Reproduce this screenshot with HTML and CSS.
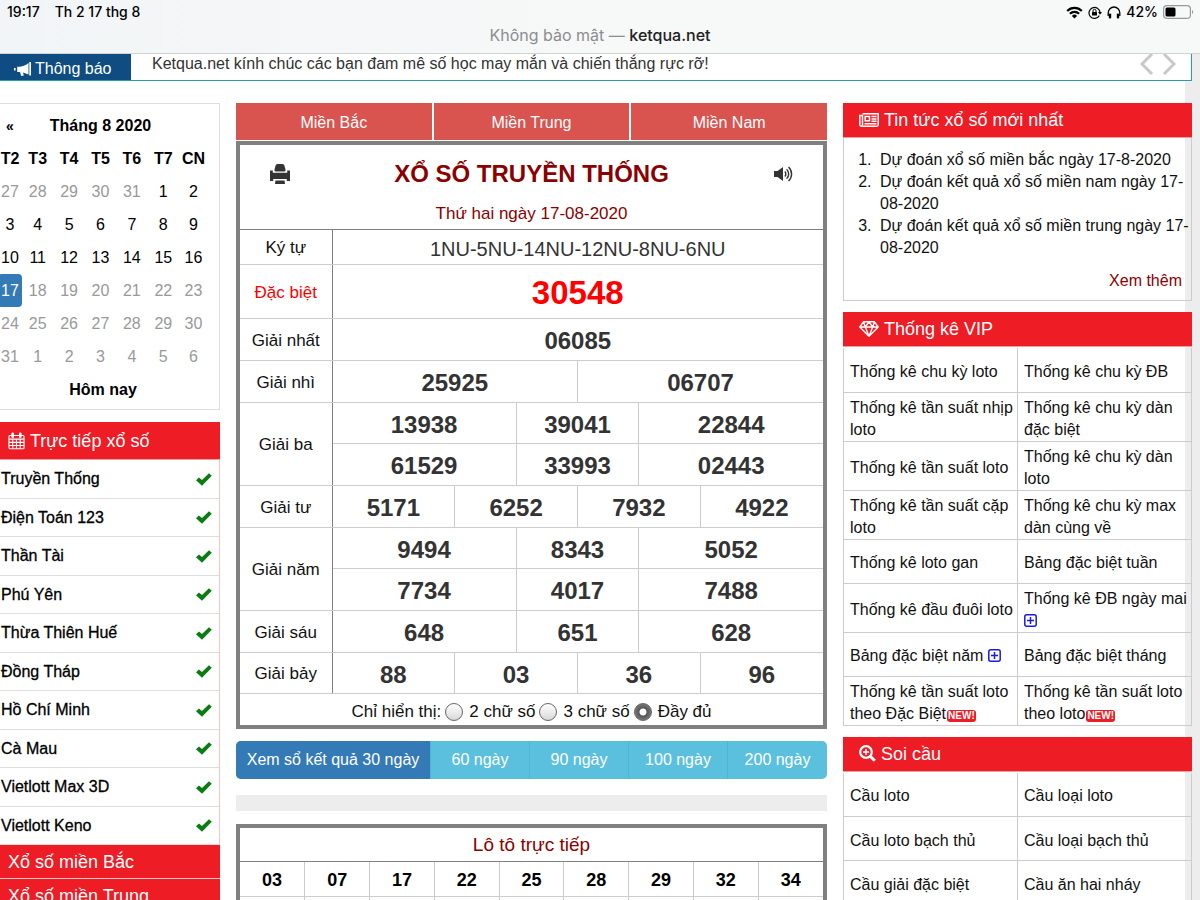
FILE: index.html
```html
<!DOCTYPE html>
<html lang="vi">
<head>
<meta charset="utf-8">
<meta name="viewport" content="width=device-width, initial-scale=1">
<title>ketqua.net</title>
<link rel="stylesheet" href="styles.css">
</head>
<body>
<svg class="defs" aria-hidden="true">
  <symbol id="check" viewBox="0 0 16 13"><path d="M0 7.2 2.9 4.4 6 7.1 13 .2 15.8 2.8 6 12.8z"/></symbol>
  <symbol id="plus" viewBox="0 0 13 13"><rect x=".8" y=".8" width="11.4" height="11.4" rx="2"/><path d="M6.500 3v7M3 6.500h7"/></symbol>
</svg>
<header class="browser">
  <div class="status">
    <div class="status-left"><span>19:17</span><span>Th 2 17 thg 8</span></div>
    <div class="status-right">
      <svg width="17" height="13" viewBox="0 0 17 13" fill="none" stroke="#000" stroke-width="2.200"><path d="M1.200 5A10.300 10.300 0 0 1 15.800 5M3.900 7.700a6.500 6.500 0 0 1 9.200 0"/><path d="M8.500 12.500 5.900 9.900a3.700 3.700 0 0 1 5.200 0z" fill="#000" stroke="none"/></svg>
      <svg width="14" height="13" viewBox="0 0 14 13"><path d="M11.300 9.600A5.500 5.500 0 1 1 12 6.500" fill="none" stroke="#000" stroke-width="1.200"/><path d="M10 6h4l-2 2.800z"/><rect x="4" y="6" width="5" height="3.600" rx=".5"/><path d="M5 6V4.800a1.500 1.500 0 0 1 3 0V6" fill="none" stroke="#000"/></svg>
      <svg width="14" height="13" viewBox="0 0 14 13"><path d="M1.200 10V6.800a5.800 5.800 0 0 1 11.600 0V10" fill="none" stroke="#000" stroke-width="1.300"/><rect x="1.800" y="7.500" width="2.400" height="5" rx="1"/><rect x="9.800" y="7.500" width="2.400" height="5" rx="1"/></svg>
      <span>42%</span>
      <svg width="31" height="14" viewBox="0 0 31 14"><rect x=".6" y=".6" width="26.800" height="12.800" rx="3.500" fill="none" stroke="#999" stroke-width="1.200"/><rect x="2.500" y="2.500" width="10" height="9" rx="1.500"/><path d="M29 5v4c1.600-.6 1.600-3.400 0-4z" fill="#999"/></svg>
    </div>
  </div>
  <div class="address">Không bảo mật — <b>ketqua.net</b></div>
</header>
<div class="page">
<section class="notice">
  <h2 class="notice-label"><svg width="17" height="15" viewBox="0 0 17 15" fill="#fff"><path d="M14.500 1v11.500L9 10.400l.8 3.200-2.600.3L6 10H3.200V4.800H6C9 4.400 12 3 14.500 1zM15.300 0H17v13.500h-1.700zM0 6h1.600v2.500H0z"/></svg>Thông báo</h2>
  <p class="notice-text">Ketqua.net kính chúc các bạn đam mê số học may mắn và chiến thắng rực rỡ!</p>
  <div class="notice-nav">
    <button aria-label="Trước"><svg width="14" height="22" viewBox="0 0 14 22"><path d="M12 0 2 10l10 10"/></svg></button>
    <button aria-label="Sau"><svg width="14" height="22" viewBox="0 0 14 22"><path d="m2 0 10 10L2 20"/></svg></button>
  </div>
</section>
<main class="columns">
  <aside class="left">
    <div class="calendar">
      <table>
        <colgroup><col class="c-first"><col><col><col><col><col><col class="c-last"></colgroup>
        <thead>
          <tr><th class="prev">«</th><th colspan="5">Tháng 8 2020</th><th></th></tr>
          <tr><th>T2</th><th>T3</th><th>T4</th><th>T5</th><th>T6</th><th>T7</th><th>CN</th></tr>
        </thead>
        <tbody>
          <tr><td class="off">27</td><td class="off">28</td><td class="off">29</td><td class="off">30</td><td class="off">31</td><td>1</td><td>2</td></tr>
          <tr><td>3</td><td>4</td><td>5</td><td>6</td><td>7</td><td>8</td><td>9</td></tr>
          <tr><td>10</td><td>11</td><td>12</td><td>13</td><td>14</td><td>15</td><td>16</td></tr>
          <tr><td class="today">17</td><td class="off">18</td><td class="off">19</td><td class="off">20</td><td class="off">21</td><td class="off">22</td><td class="off">23</td></tr>
          <tr class="off"><td>24</td><td>25</td><td>26</td><td>27</td><td>28</td><td>29</td><td>30</td></tr>
          <tr class="off"><td>31</td><td>1</td><td>2</td><td>3</td><td>4</td><td>5</td><td>6</td></tr>
        </tbody>
        <tfoot><tr><th colspan="7">Hôm nay</th></tr></tfoot>
      </table>
    </div>
    <section class="live">
      <h2 class="bar live-bar"><svg width="17" height="18" viewBox="0 0 18 18" fill="none" stroke="#fff" stroke-width="1.200"><rect x="1" y="3.200" width="16" height="14" rx="1"/><path d="M1 7h16M1 10.400h16M1 13.800h16M5 7v10M9 7v10M13 7v10"/><path d="M5 1.500v3M13 1.500v3" stroke-width="2.800" stroke-linecap="round"/></svg>Trực tiếp xổ số</h2>
      <ul>
        <li><a href="#">Truyền Thống</a><svg class="check"><use href="#check"/></svg></li>
        <li><a href="#">Điện Toán 123</a><svg class="check"><use href="#check"/></svg></li>
        <li><a href="#">Thần Tài</a><svg class="check"><use href="#check"/></svg></li>
        <li><a href="#">Phú Yên</a><svg class="check"><use href="#check"/></svg></li>
        <li><a href="#">Thừa Thiên Huế</a><svg class="check"><use href="#check"/></svg></li>
        <li><a href="#">Đồng Tháp</a><svg class="check"><use href="#check"/></svg></li>
        <li><a href="#">Hồ Chí Minh</a><svg class="check"><use href="#check"/></svg></li>
        <li><a href="#">Cà Mau</a><svg class="check"><use href="#check"/></svg></li>
        <li><a href="#">Vietlott Max 3D</a><svg class="check"><use href="#check"/></svg></li>
        <li><a href="#">Vietlott Keno</a><svg class="check"><use href="#check"/></svg></li>
      </ul>
    </section>
    <h2 class="bar region">Xổ số miền Bắc</h2>
    <h2 class="bar region">Xổ số miền Trung</h2>
  </aside>

  <div class="center">
    <nav class="tabs"><a href="#">Miền Bắc</a><a href="#">Miền Trung</a><a href="#">Miền Nam</a></nav>
    <section class="results">
      <div class="results-head">
        <button aria-label="In"><svg width="20" height="20" viewBox="0 0 20 20" fill="#333"><path d="M7.500 0h5q1.500 0 1.900 1.500L15.600 6q0 1.500-1.500 1.500H5.900Q4.400 7.500 4.400 6l1.200-4.500Q6 0 7.500 0zM0 6.500h2.800v2.300h14.400V6.500H20V17h-3.200v-2H3.200v2H0zM5.500 16.500h9l.5 3.500H5z"/></svg></button>
        <h1>XỔ SỐ TRUYỀN THỐNG</h1>
        <button aria-label="Âm thanh"><svg width="19" height="16" viewBox="0 0 19 16" fill="none" stroke="#333" stroke-width="1.400"><path d="M0 5h3.500L9 1v14l-5.500-4H0z" fill="#333" stroke="none"/><path d="M10.800 5.500a3.500 3.500 0 0 1 0 5M12.600 3.200a6.600 6.600 0 0 1 0 9.600M14.500 1a9.500 9.500 0 0 1 0 14"/></svg></button>
        <p>Thứ hai ngày 17-08-2020</p>
      </div>
      <table class="prizes">
        <colgroup><col class="c-label"><col><col><col><col><col><col><col><col></colgroup>
        <tbody>
          <tr class="symbols"><th>Ký tự</th><td colspan="8">1NU-5NU-14NU-12NU-8NU-6NU</td></tr>
          <tr class="special"><th>Đặc biệt</th><td colspan="8">30548</td></tr>
        </tbody>
        <tbody>
          <tr><th>Giải nhất</th><td colspan="8">06085</td></tr>
          <tr><th>Giải nhì</th><td colspan="4">25925</td><td colspan="4">06707</td></tr>
          <tr><th rowspan="2">Giải ba</th><td colspan="3">13938</td><td colspan="2">39041</td><td colspan="3">22844</td></tr>
          <tr><td colspan="3">61529</td><td colspan="2">33993</td><td colspan="3">02443</td></tr>
          <tr><th>Giải tư</th><td colspan="2">5171</td><td colspan="2">6252</td><td colspan="2">7932</td><td colspan="2">4922</td></tr>
          <tr><th rowspan="2">Giải năm</th><td colspan="3">9494</td><td colspan="2">8343</td><td colspan="3">5052</td></tr>
          <tr><td colspan="3">7734</td><td colspan="2">4017</td><td colspan="3">7488</td></tr>
          <tr><th>Giải sáu</th><td colspan="3">648</td><td colspan="2">651</td><td colspan="3">628</td></tr>
          <tr><th>Giải bảy</th><td colspan="2">88</td><td colspan="2">03</td><td colspan="2">36</td><td colspan="2">96</td></tr>
        </tbody>
      </table>
      <div class="display">
        <span>Chỉ hiển thị:</span>
        <label><input type="radio" name="digits">2 chữ số</label>
        <label><input type="radio" name="digits">3 chữ số</label>
        <label><input type="radio" name="digits" checked>Đầy đủ</label>
      </div>
    </section>
    <div class="days"><button class="primary">Xem sổ kết quả 30 ngày</button><button>60 ngày</button><button>90 ngày</button><button>100 ngày</button><button>200 ngày</button></div>
    <div class="spacer"></div>
    <section class="loto">
      <table>
        <caption>Lô tô trực tiếp</caption>
        <tbody>
          <tr><td>03</td><td>07</td><td>17</td><td>22</td><td>25</td><td>28</td><td>29</td><td>32</td><td>34</td></tr>
          <tr><td></td><td></td><td></td><td></td><td></td><td></td><td></td><td></td><td></td></tr>
        </tbody>
      </table>
    </section>
  </div>

  <aside class="right">
    <section>
      <h2 class="bar"><svg width="20" height="14" viewBox="0 0 20 14" fill="none" stroke="#fff" stroke-width="1.500"><path d="M3.500.8h15.700v11a1.500 1.500 0 0 1-1.500 1.400H2.200A1.500 1.500 0 0 1 .8 11.800V2.500h2.700v9.300a1.400 1.400 0 0 1-1.300 1.400M12.500 3.500h5M12.500 6h5M12.500 8.300h5M5.500 10.700h12"/><rect x="6.200" y="3.500" width="4.300" height="4.300"/></svg>Tin tức xổ số mới nhất</h2>
      <div class="news">
        <ol>
          <li><a href="#">Dự đoán xổ số miền bắc ngày 17-8-2020</a></li>
          <li><a href="#">Dự đoán kết quả xổ số miền nam ngày 17-<wbr>08-2020</a></li>
          <li><a href="#">Dự đoán kết quả xổ số miền trung ngày 17-<wbr>08-2020</a></li>
        </ol>
        <a class="more" href="#">Xem thêm</a>
      </div>
    </section>
    <section>
      <h2 class="bar"><svg width="20" height="16" viewBox="0 0 20 16" fill="none" stroke="#fff" stroke-width="1.400" stroke-linejoin="round"><path d="M4.500.8h11L19.200 6 10 15.300.8 6zM.8 6h18.400M4.500.8 6.300 6 10 15.300 13.700 6l1.800-5.200M6.300 6 10 .8 13.700 6"/></svg>Thống kê VIP</h2>
      <table class="links">
        <tr><td><a href="#">Thống kê chu kỳ loto</a></td><td><a href="#">Thống kê chu kỳ ĐB</a></td></tr>
        <tr><td><a href="#">Thống kê tần suất nhịp loto</a></td><td><a href="#">Thống kê chu kỳ dàn đặc biệt</a></td></tr>
        <tr><td><a href="#">Thống kê tần suất loto</a></td><td><a href="#">Thống kê chu kỳ dàn loto</a></td></tr>
        <tr><td><a href="#">Thống kê tần suất cặp loto</a></td><td><a href="#">Thống kê chu kỳ max dàn cùng về</a></td></tr>
        <tr><td><a href="#">Thống kê loto gan</a></td><td><a href="#">Bảng đặc biệt tuần</a></td></tr>
        <tr><td><a href="#">Thống kê đầu đuôi loto</a></td><td><a href="#">Thống kê ĐB ngày mai <svg class="plus"><use href="#plus"/></svg></a></td></tr>
        <tr><td><a href="#">Bảng đặc biệt năm <svg class="plus"><use href="#plus"/></svg></a></td><td><a href="#">Bảng đặc biệt tháng</a></td></tr>
        <tr><td><a href="#">Thống kê tần suất loto theo Đặc Biệt<span class="new">NEW!</span></a></td><td><a href="#">Thống kê tần suất loto theo loto<span class="new">NEW!</span></a></td></tr>
      </table>
    </section>
    <section>
      <h2 class="bar"><svg width="17" height="17" viewBox="0 0 17 17" fill="none" stroke="#fff"><circle cx="7" cy="7" r="5.800" stroke-width="2.200"/><path d="m11 11 4.800 4.800" stroke-width="3"/><path d="M7 4v6M4 7h6" stroke-width="1.500"/></svg>Soi cầu</h2>
      <table class="links">
        <tr><td><a href="#">Cầu loto</a></td><td><a href="#">Cầu loại loto</a></td></tr>
        <tr><td><a href="#">Cầu loto bạch thủ</a></td><td><a href="#">Cầu loại bạch thủ</a></td></tr>
        <tr><td><a href="#">Cầu giải đặc biệt</a></td><td><a href="#">Cầu ăn hai nháy</a></td></tr>
      </table>
    </section>
  </aside>
</main>
</div>
</body>
</html>
```
FILE: styles.css
```css
* { box-sizing: border-box; }
body {
  margin: 0;
  height: 100vh;
  overflow: hidden;
  background: #ededed;
  color: #111;
  font: 16px/22px "Liberation Sans", Arial, sans-serif;
}
h1, h2, p, ul, ol { margin: 0; padding: 0; }
h2 { font-weight: 400; }
a { color: inherit; text-decoration: none; }
button { border: 0; padding: 0; background: none; font: inherit; color: inherit; }
table { width: 100%; border-collapse: collapse; }
svg { flex: none; }
.defs { position: absolute; width: 0; height: 0; }

/* Browser chrome */
.browser { background: linear-gradient(90deg, #f2f5f7, #f7f8f8 50%); border-bottom: 1px solid #cfd3d4; font-family: Inter, sans-serif; }
.status { display: flex; justify-content: space-between; height: 24px; padding: 0 6px 0 7px; font-size: 14px; font-weight: 500; line-height: 24px; color: #000; }
.status-left { display: flex; gap: 15px; }
.status-right { display: flex; align-items: center; gap: 5px; }
.address { height: 29px; font-size: 16px; line-height: 22px; text-align: center; color: #8b8d8f; }
.address b { font-weight: 500; color: #222; }

/* Page frame */
.page { margin-right: 15px; background: #fff; }
.notice { display: flex; height: 27px; margin-right: -7px; overflow: hidden; background: #fff; border: solid #2f9b9d; border-width: 0 1px 1px 0; color: #333; }
.notice-label { display: flex; align-items: center; gap: 4px; width: 131px; height: 30px; padding-left: 14px; background: #0f4c81; color: #fff; font-size: 16px; }
.notice-text { flex: 1; padding-left: 21px; line-height: 20px; }
.notice-nav { display: flex; gap: 8px; padding-right: 15px; }
.notice-nav button { height: 22px; }
.notice-nav path { fill: none; stroke: #c8c8c8; stroke-width: 3; }
.columns { display: grid; grid-template-columns: 220px minmax(0, 1fr) 349px; gap: 16px; align-items: start; margin: 22px -7px 0 0; }
.bar { display: flex; align-items: center; gap: 5px; height: 35px; padding-left: 16px; background: #ee1c25; border-bottom: 1px solid #e8a0a4; color: #fff; font-size: 18px; }

/* Calendar */
.calendar { padding: 5px 11px 3px 0; border: 1px solid #ddd; border-left: 0; color: #000; }
.calendar table { table-layout: fixed; margin-left: -2px; width: 210px; }
.calendar .c-first { width: 24px; }
.calendar .c-last { width: 29px; }
.calendar th, .calendar td { height: 33px; padding: 0; text-align: center; }
.calendar .prev { font-size: 14px; }
.calendar .off { color: #999; }
.calendar .today { background: #337ab7; border-radius: 4px; color: #fff; }

/* Live list */
.live { margin-top: 12px; border-right: 1px solid #f3c5c7; }
.live-bar { height: 38px; margin-right: -1px; padding-left: 8px; }
.live ul { display: grid; grid-auto-rows: 1fr; min-height: 385px; list-style: none; }
.live li { display: flex; align-items: center; justify-content: space-between; padding: 1px 7px 0 1px; border-bottom: 1px solid #ddd; color: #000; -webkit-text-stroke: 0.3px #000; }
.check { width: 16px; height: 13px; fill: #0a7d10; }
.region { height: 34px; padding-left: 8px; border-bottom: 1px solid #f6c6c8; }

/* Results */
.tabs { display: grid; grid-template-columns: repeat(3, 1fr); gap: 2px; margin-bottom: 1px; }
.tabs a { padding: 9px 0 6px; background: #d9534f; color: #fff; text-align: center; }
.results, .loto { border: 4px solid #808080; background: #fff; }
.results-head { display: grid; grid-template-columns: 80px 1fr 80px; align-items: center; justify-items: center; padding: 12px 0 4px; }
.results-head button { height: 34px; display: grid; place-items: center; }
.results-head h1 { color: #8b0000; font-size: 24px; line-height: 34px; }
.results-head p { grid-column: 1 / -1; margin-top: 12px; color: #8b0000; font-size: 17px; line-height: 22px; }
.prizes { table-layout: fixed; border-top: 1px solid #808080; }
.prizes .c-label { width: 92px; }
.prizes th { border: solid #ccc; border-width: 0 1px 1px 0; border-right-color: #808080; padding: 2px 0 0; font-size: 17px; font-weight: 400; }
.prizes td { height: 42px; padding: 3px 0 0; border: solid #ccc; border-width: 0 0 1px 1px; color: #333; font-size: 24px; font-weight: 700; line-height: 26px; text-align: center; }
.prizes td:last-child { border-right: 0; }
.prizes tr:nth-child(3n) td { height: 41px; }
.prizes .symbols td { height: 35px; font-size: 20px; font-weight: 400; }
.prizes .special td { height: 54px; color: red; font-size: 33px; }
.prizes .special th { color: red; }
.display { display: flex; justify-content: center; gap: 4px; padding: 7px 0 2px; font-size: 17px; }
.display label { display: flex; align-items: center; gap: 6px; }
.display input { appearance: none; width: 18px; height: 18px; margin: 0; border: 1px solid #666; border-radius: 50%; background: linear-gradient(#fff, #d8d8d8); }
.display input:checked { background: radial-gradient(circle, #fff 3px, #555 4px, #777 8px); }

.days { display: grid; grid-template-columns: 194fr 99fr 99fr 99fr 100fr; height: 38px; margin-top: 12px; border-radius: 5px; overflow: hidden; background: #5bc0de; color: #fff; }
.days button + button { border-left: 1px solid #52b4d3; }
.days .primary { background: #337ab7; }
.spacer { height: 16px; margin: 16px 0 13px; background: #ededed; }
.loto table { table-layout: fixed; }
.loto caption { padding: 6px 0 5px; border-bottom: 1px solid #808080; color: #8b0000; font-size: 19px; }
.loto td { height: 34px; padding: 2px 0 0; border: 1px solid #ccc; border-top: 0; color: #000; font-size: 18px; font-weight: 700; text-align: center; }
.loto td:first-child { border-left: 0; }
.loto td:last-child { border-right: 0; }

/* Right column */
.right { display: grid; gap: 11px; }
.news { display: flex; flex-direction: column; padding: 11px 0 8px 15px; border: 1px solid #ccc; border-top: 0; }
.news ol { margin-bottom: 11px; padding-left: 17px; }
.news li { padding-left: 4px; }
.more { align-self: flex-end; margin-right: 9px; color: #8b0000; }
.links { table-layout: fixed; margin-top: 1px; }
.links td { height: 44px; padding: 4px 4px 0 6px; border: 1px solid #ccc; border-top: 0; }
.plus { width: 13px; height: 13px; vertical-align: -1px; fill: none; stroke: #1a1ae0; stroke-width: 1.5; }
.new { display: inline-block; margin-left: 1px; padding: 0 1px; border-radius: 3px; background: #ee1c25; color: #fff; font-size: 10px; font-weight: 700; line-height: 12px; }
```
